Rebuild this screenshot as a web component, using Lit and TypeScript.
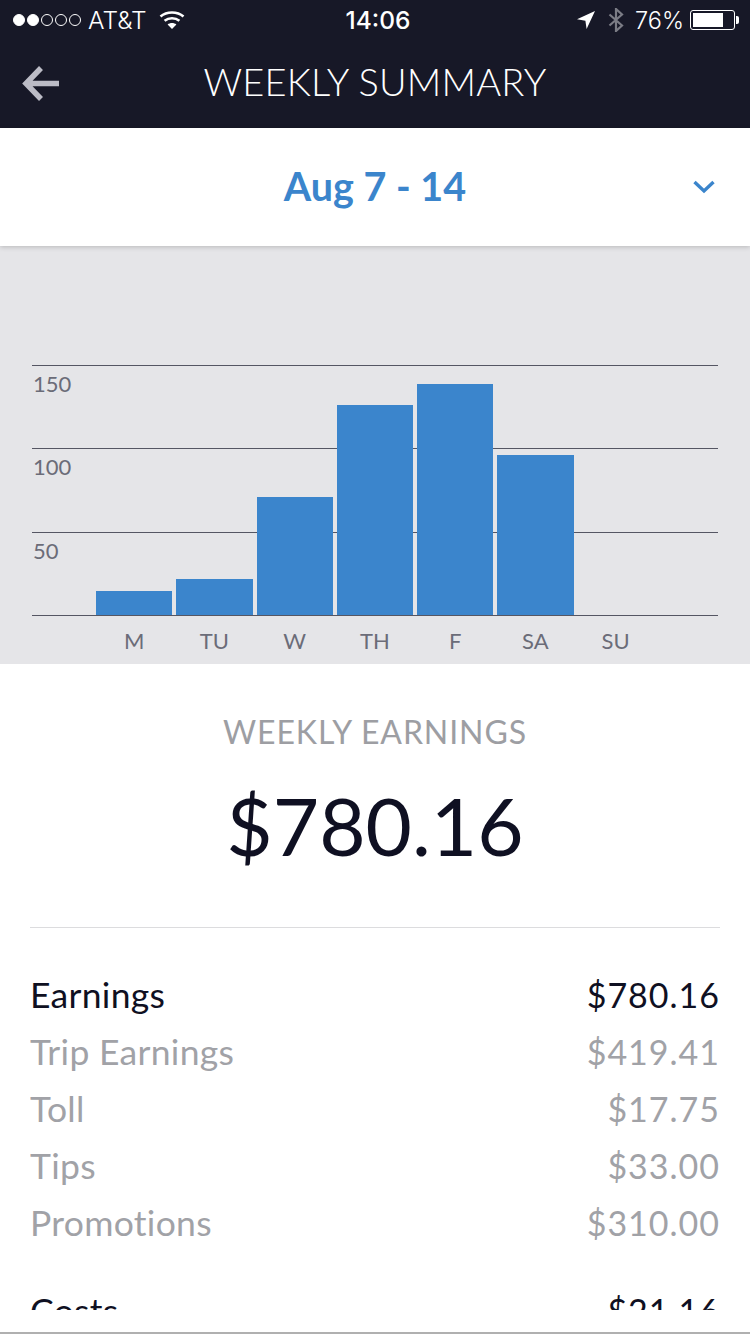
import {LitElement, css, html, svg} from 'lit'
import {customElement} from 'lit/decorators.js'

const DAYS = [
    {label: 'M', value: 24},
    {label: 'TU', value: 36},
    {label: 'W', value: 118},
    {label: 'TH', value: 210},
    {label: 'F', value: 231},
    {label: 'SA', value: 160},
    {label: 'SU', value: 0},
]

const ROWS = [
    {label: 'Earnings', amount: '$780.16', strong: true},
    {label: 'Trip Earnings', amount: '$419.41'},
    {label: 'Toll', amount: '$17.75'},
    {label: 'Tips', amount: '$33.00'},
    {label: 'Promotions', amount: '$310.00'},
    {label: 'Costs', amount: '$21.16', strong: true, gap: true},
]

const wifiIcon = svg`<svg class="wifi" width="26" height="20" viewBox="0 0 26 20" fill="none" stroke="#fff" stroke-width="2.6">
    <path d="M1.5 6.5C7.8 1.2 18.2 1.2 24.5 6.5"/>
    <path d="M5.6 10.8C9.8 7.4 16.2 7.4 20.4 10.8"/>
    <path d="M13 19l-4.4-4.6c2.5-2 6.3-2 8.8 0z" fill="#fff" stroke="none"/>
</svg>`

const locationIcon = svg`<svg width="18" height="18" viewBox="0 0 18 18"><path d="M18 0L9.6 18 8.4 9.8 0 8.2z" fill="#fff"/></svg>`

const bluetoothIcon = svg`<svg width="16" height="24" viewBox="0 0 16 24" fill="none" stroke="#7b7c85" stroke-width="2.2">
    <path d="M1.5 6.5L14 17.5 8 23V1l6 5.5L1.5 17.5"/>
</svg>`

@customElement('app-root')
class AppRoot extends LitElement {
    static styles = css`
        :host {
            display: flex;
            flex-direction: column;
            height: 1334px;
            overflow: hidden;
            background: #fff;
            font-family: Lato, sans-serif;
        }

        .nav {
            flex: none;
            height: 128px;
            background: #171827;
            color: #fff;
        }

        .status {
            display: flex;
            align-items: center;
            justify-content: space-between;
            height: 40px;
            padding: 0 11px 0 13px;
            font-family: Inter, sans-serif;
            font-size: 24.5px;
            font-weight: 300;
        }

        .status-side {
            display: flex;
            align-items: center;
            flex: 1;
        }

        .status-side.right {
            justify-content: flex-end;
        }

        .dot {
            width: 12px;
            height: 12px;
            margin-right: 2px;
            border: 1px solid #fff;
            border-radius: 50%;
            box-sizing: border-box;
        }

        .dot.on {
            background: #fff;
        }

        .carrier {
            margin-left: 5px;
        }

        .wifi {
            margin-left: 12px;
        }

        .time {
            margin-left: 4px;
            font-weight: 500;
        }

        .bluetooth {
            display: flex;
            margin: 0 11px 0 13px;
        }

        .percent {
            font-size: 23.5px;
        }

        .battery {
            display: flex;
            align-items: center;
            margin-left: 6px;
        }

        .battery-body {
            width: 45px;
            height: 20px;
            padding: 2px;
            border: 1px solid #fff;
            border-radius: 3px;
            box-sizing: border-box;
        }

        .battery-level {
            width: 76%;
            height: 100%;
            background: #fff;
        }

        .battery-tip {
            width: 3px;
            height: 8px;
            margin-left: 1px;
            background: #fff;
            border-radius: 0 2px 2px 0;
        }

        .title-row {
            display: flex;
            align-items: center;
            justify-content: center;
            position: relative;
            height: 88px;
            padding-bottom: 6px;
            box-sizing: border-box;
        }

        .back {
            position: absolute;
            left: 22px;
            top: 25px;
        }

        h1 {
            margin: 0;
            font-size: 38px;
            font-weight: 300;
            letter-spacing: 0.15px;
        }

        .date-bar {
            display: flex;
            align-items: center;
            justify-content: center;
            position: relative;
            z-index: 1;
            flex: none;
            height: 118px;
            padding-bottom: 4px;
            box-sizing: border-box;
            background: #fff;
            box-shadow: 0 1px 5px rgba(0, 0, 0, 0.2);
            color: #3b85cc;
            font-size: 39.5px;
            font-weight: 700;
        }

        .chevron {
            position: absolute;
            right: 35px;
            top: 52px;
        }

        .chart {
            flex: none;
            height: 418px;
            padding: 119px 32px 0;
            box-sizing: border-box;
            background: #e5e5e8;
            color: #6b6c78;
            font-size: 22px;
        }

        .plot {
            position: relative;
            height: 251px;
            border-bottom: 1px solid #555663;
            box-sizing: border-box;
        }

        .grid-band {
            height: 83.33px;
            box-sizing: border-box;
            border-top: 1px solid #555663;
            padding: 3px 0 0 1px;
            line-height: 30px;
        }

        .days {
            display: grid;
            grid-template-columns: repeat(7, 76.25px);
            gap: 4px;
            padding-left: 64px;
        }

        .bars {
            position: absolute;
            left: 0;
            right: 0;
            bottom: 0;
            height: 250px;
            align-items: end;
        }

        .bar {
            background: #3b85cc;
        }

        .day {
            padding-top: 10px;
            line-height: 30px;
            text-align: center;
        }

        .total {
            flex: none;
            height: 264px;
            margin: 0 30px;
            border-bottom: 1px solid #dcdcde;
            box-sizing: border-box;
            text-align: center;
        }

        .total-label {
            padding-top: 46px;
            color: #9d9ea3;
            font-size: 32px;
            letter-spacing: 0.9px;
            line-height: 44px;
        }

        .total-amount {
            padding-top: 21px;
            color: #0f1022;
            font-size: 80px;
            line-height: 100px;
        }

        .rows {
            flex: none;
            height: 382px;
            margin: 0 30px;
            padding-top: 38px;
            box-sizing: border-box;
            overflow: hidden;
            font-size: 34px;
        }

        .row {
            display: flex;
            justify-content: space-between;
            height: 57px;
            line-height: 57px;
            color: #a1a2a7;
        }

        .label {
            font-size: 35.5px;
            letter-spacing: 0.3px;
        }

        .amount {
            letter-spacing: 1px;
        }

        .row.strong {
            color: #0f1022;
        }

        .row.gap {
            margin-top: 31px;
        }

        .footer {
            flex: 1;
            border-bottom: 2px solid #b0b0b0;
        }
    `

    render() {
        return html`
            <header class="nav">
                <div class="status">
                    <div class="status-side">
                        ${[1, 1, 0, 0, 0].map((on) => html`<span class="dot ${on ? 'on' : ''}"></span>`)}
                        <span class="carrier">AT&amp;T</span>
                        ${wifiIcon}
                    </div>
                    <span class="time">14:06</span>
                    <div class="status-side right">
                        ${locationIcon}
                        <span class="bluetooth">${bluetoothIcon}</span>
                        <span class="percent">76%</span>
                        <span class="battery">
                            <span class="battery-body"><div class="battery-level"></div></span>
                            <span class="battery-tip"></span>
                        </span>
                    </div>
                </div>
                <div class="title-row">
                    <svg class="back" width="38" height="38" viewBox="0 0 38 38" fill="none" stroke="#bcbcc6" stroke-width="5.5">
                        <path d="M37 18.500H4M19 3L4 18.500 19 34"/>
                    </svg>
                    <h1>WEEKLY SUMMARY</h1>
                </div>
            </header>
            <div class="date-bar">
                Aug 7 - 14
                <svg class="chevron" width="22" height="14" viewBox="0 0 22 14" fill="none" stroke="#3b85cc" stroke-width="3.4">
                    <path d="M1.500 2L11 11 20.500 2"/>
                </svg>
            </div>
            <section class="chart">
                <div class="plot">
                    <div class="grid-band">150</div>
                    <div class="grid-band">100</div>
                    <div class="grid-band">50</div>
                    <div class="days bars">
                        ${DAYS.map((d) => html`<div class="bar" style="height: ${d.value}px"></div>`)}
                    </div>
                </div>
                <div class="days">
                    ${DAYS.map((d) => html`<div class="day">${d.label}</div>`)}
                </div>
            </section>
            <section class="total">
                <div class="total-label">WEEKLY EARNINGS</div>
                <div class="total-amount">$780.16</div>
            </section>
            <section class="rows">
                ${ROWS.map((r) => html`
                    <div class="row ${r.strong ? 'strong' : ''} ${r.gap ? 'gap' : ''}">
                        <span class="label">${r.label}</span>
                        <span class="amount">${r.amount}</span>
                    </div>
                `)}
            </section>
            <div class="footer"></div>
        `
    }
}

export {AppRoot}
